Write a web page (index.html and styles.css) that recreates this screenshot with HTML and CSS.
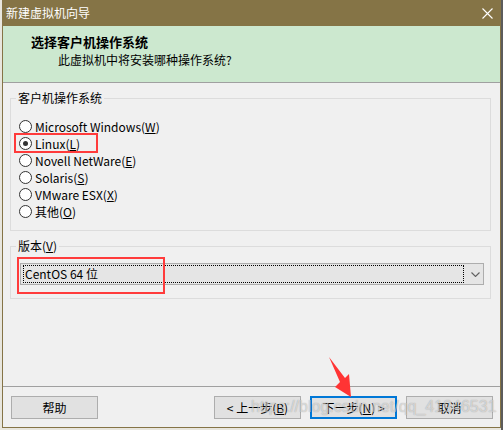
FILE: index.html
```html
<!DOCTYPE html>
<html>
<head>
<meta charset="utf-8">
<link rel="stylesheet" href="styles.css">
</head>
<body>
<div class="window">
  <div class="titlebar">
    <span class="title">新建虚拟机向导</span>
    <svg class="close" width="11" height="11" viewBox="0 0 11 11"><path d="M0.5 0.5 L10.5 10.5 M10.5 0.5 L0.5 10.5" stroke="#fff" stroke-width="1.1" fill="none"/></svg>
  </div>
  <div class="header">
    <div class="h-title">选择客户机操作系统</div>
    <div class="h-sub">此虚拟机中将安装哪种操作系统?</div>
  </div>
  <div class="content">
    <fieldset class="group g-os">
      <legend>客户机操作系统</legend>
      <div class="radios">
        <div class="radio"><span class="circle"></span><span>Microsoft Windows(<u>W</u>)</span></div>
        <div class="radio marked"><span class="circle checked"></span><span>Linux(<u>L</u>)</span></div>
        <div class="radio"><span class="circle"></span><span>Novell NetWare(<u>E</u>)</span></div>
        <div class="radio"><span class="circle"></span><span>Solaris(<u>S</u>)</span></div>
        <div class="radio"><span class="circle"></span><span>VMware ESX(<u>X</u>)</span></div>
        <div class="radio"><span class="circle"></span><span>其他(<u>O</u>)</span></div>
      </div>
    </fieldset>
    <fieldset class="group g-ver">
      <legend>版本(<u>V</u>)</legend>
      <div class="select-wrap">
        <div class="select">
          <span class="focus">CentOS 64 位</span>
          <svg class="chev" width="9" height="5" viewBox="0 0 9 5"><path d="M0.5 0.5 L4.5 4.5 L8.5 0.5" stroke="#606060" stroke-width="1.1" fill="none"/></svg>
        </div>
        <span class="mark-select"></span>
      </div>
    </fieldset>
  </div>
  <div class="footer">
    <button class="btn">帮助</button>
    <div class="spacer"></div>
    <button class="btn">&lt; 上一步(<u>B</u>)</button>
    <button class="btn primary">下一步(<u>N</u>) &gt;</button>
    <button class="btn">取消</button>
  </div>
  <svg class="arrow" width="30" height="45" viewBox="0 0 30 45"><polygon points="4,2 20,23 24,19 26,42 10,32 15,27" fill="#ff3434"/></svg>
  <div class="watermark">https://blog.csdn.net/qq_41946531</div>
</div>
</body>
</html>
```
FILE: styles.css
```css
* { box-sizing: border-box; }
html, body { margin: 0; padding: 0; }
body {
  width: 503px;
  height: 430px;
  overflow: hidden;
  background: linear-gradient(to right, #e8e6de 0, #e8e6de 501px, #5c5c5c 501px, #5c5c5c 503px);
  font-family: "Noto Sans CJK SC", "Microsoft YaHei", sans-serif;
  font-size: 12px;
  color: #000;
}
.window {
  position: relative;
  margin-left: 2px;
  width: 499px;
  height: 428px;
  background: #f0f0f0;
  border-left: 1px solid #857446;
  border-right: 1px solid #857446;
  border-bottom: 1px solid #857446;
  display: flex;
  flex-direction: column;
}
.titlebar {
  height: 26px;
  background: #857446;
  display: flex;
  align-items: center;
  justify-content: space-between;
  padding: 0 7px 0 3px;
  color: #fff;
  line-height: 16px;
  flex: none;
}
.title { font-size: 12px; }
.close { display: block; }
.header {
  height: 57px;
  background: #cce8cf;
  border-bottom: 1px solid #a0a0a0;
  padding: 8px 0 0 28px;
  flex: none;
}
.h-title { font-size: 13px; font-weight: bold; line-height: 16px; }
.h-sub { margin: 2px 0 0 27px; line-height: 16px; }
.content {
  flex: 1;
  display: flex;
  flex-direction: column;
}
.group {
  margin: 7px 0 0 7px;
  width: 481px;
  border: 1px solid #dcdcdc;
  padding: 0;
  min-width: 0;
}
.group legend {
  margin-left: 5px;
  padding: 0 2px;
  line-height: 16px;
}
.radios {
  padding: 12px 0 10px 8px;
  display: flex;
  flex-direction: column;
}
.radio {
  height: 17px;
  display: flex;
  align-items: center;
  gap: 3px;
  line-height: 16px;
  align-self: flex-start;
  position: relative;
}
.circle {
  width: 13px;
  height: 13px;
  border: 1px solid #333;
  border-radius: 50%;
  background: #fff;
  display: flex;
  align-items: center;
  justify-content: center;
  flex: none;
}
.circle.checked::after {
  content: "";
  width: 5px;
  height: 5px;
  border-radius: 50%;
  background: #333;
}
.radio.marked::after {
  content: "";
  position: absolute;
  left: -5px;
  width: 80px;
  top: -2px;
  bottom: -1px;
  border: 2px solid #ff3b3b;
}
.select-wrap {
  position: relative;
  padding: 9px 0 13px 9px;
}
.select {
  width: 464px;
  height: 22px;
  border: 1px solid #adadad;
  background: #e5e5e5;
  display: flex;
  align-items: center;
  padding: 0 0 0 2px;
}
.focus {
  width: 441px;
  height: 18px;
  border: 1px dotted #000;
  line-height: 16px;
  padding-left: 1px;
}
.chev { margin-left: 7px; display: block; }
.mark-select {
  position: absolute;
  left: 6px;
  top: 3px;
  width: 148px;
  height: 37px;
  border: 2px solid #ff3b3b;
}
.footer {
  flex: none;
  border-top: 1px solid #a0a0a0;
  padding: 9px 7px 8px 8px;
  display: flex;
  gap: 9px;
}
.spacer { flex: 1; }
.btn {
  width: 87px;
  height: 23px;
  border: 1px solid #adadad;
  background: #e1e1e1;
  font-family: inherit;
  font-size: 12px;
  line-height: 16px;
  padding: 0;
  color: #000;
}
.btn.primary {
  border: 2px solid #0078d7;
}
.arrow {
  position: absolute;
  left: 322px;
  top: 355px;
}
.watermark {
  position: absolute;
  left: 248px;
  top: 398px;
  font-family: "Liberation Sans", Arial, sans-serif;
  font-size: 16px;
  line-height: 18px;
  color: rgba(255, 255, 255, 0.55);
  text-shadow: 0 0 1px rgba(0, 0, 0, 0.35);
  white-space: nowrap;
  pointer-events: none;
}
```
